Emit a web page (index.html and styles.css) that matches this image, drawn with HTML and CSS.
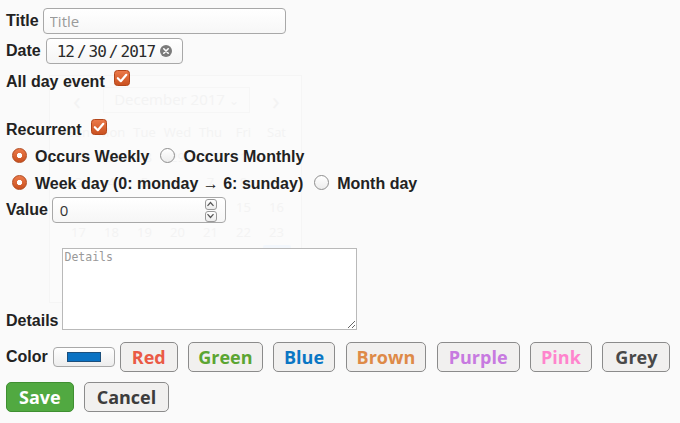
FILE: index.html
```html
<!DOCTYPE html>
<html lang="en">
<head>
<meta charset="utf-8">
<title>Event form</title>
<link rel="stylesheet" href="styles.css">
</head>
<body>
<form class="event-form">
  <div class="row r-title">
    <label class="lbl">Title</label>
    <input class="text-input title-input" type="text" placeholder="Title">
  </div>
  <div class="row r-date">
    <label class="lbl">Date</label>
    <div class="date-input">
      <span class="seg">12</span><span class="sep">/</span><span class="seg">30</span><span class="sep">/</span><span class="seg">2017</span>
      <svg class="clear" width="12" height="12" viewBox="0 0 12 12"><circle cx="6" cy="6" r="6" fill="#7b7b7b"/><path d="M3.8 3.8 L8.2 8.2 M8.2 3.8 L3.8 8.2" stroke="#fff" stroke-width="1.6" stroke-linecap="round"/></svg>
    </div>
  </div>
  <div class="row r-allday">
    <label class="lbl">All day event</label>
    <span class="checkbox cb-allday">
      <svg width="16" height="16" viewBox="0 0 16 16"><defs><linearGradient id="cbg" x1="0" y1="0" x2="0" y2="1"><stop offset="0" stop-color="#ec7a4a"/><stop offset="1" stop-color="#c9501f"/></linearGradient></defs><rect x="0.5" y="0.5" width="15" height="15" rx="3" fill="url(#cbg)" stroke="#b2461b"/><path d="M3.8 8.2 L6.8 11.2 L12.3 4.8" fill="none" stroke="#fff" stroke-width="2.2" stroke-linecap="round" stroke-linejoin="round"/></svg>
    </span>
  </div>
  <div class="row r-recurrent">
    <label class="lbl">Recurrent</label>
    <span class="checkbox cb-recurrent">
      <svg width="16" height="16" viewBox="0 0 16 16"><rect x="0.5" y="0.5" width="15" height="15" rx="3" fill="url(#cbg)" stroke="#b2461b"/><path d="M3.8 8.2 L6.8 11.2 L12.3 4.8" fill="none" stroke="#fff" stroke-width="2.2" stroke-linecap="round" stroke-linejoin="round"/></svg>
    </span>
  </div>
  <div class="row r-radio">
    <span class="radio checked"></span><span class="lbl">Occurs Weekly</span>
    <span class="radio"></span><span class="lbl">Occurs Monthly</span>
  </div>
  <div class="row r-radio r-radio2">
    <span class="radio checked"></span><span class="lbl">Week day (0: monday → 6: sunday)</span>
    <span class="radio"></span><span class="lbl">Month day</span>
  </div>
  <div class="row r-value">
    <label class="lbl">Value</label>
    <div class="num-input">
      <span class="num-val">0</span>
      <span class="spinner">
        <span class="spin"><svg width="9" height="6" viewBox="0 0 9 6"><path d="M1.5 4.8 L4.5 1.5 L7.5 4.8" fill="none" stroke="#555" stroke-width="1.2"/></svg></span>
        <span class="spin"><svg width="9" height="6" viewBox="0 0 9 6"><path d="M1.5 1.2 L4.5 4.5 L7.5 1.2" fill="none" stroke="#555" stroke-width="1.2"/></svg></span>
      </span>
    </div>
  </div>
  <div class="row r-details">
    <label class="lbl lbl-details">Details</label>
    <textarea class="details" placeholder="Details"></textarea>
  </div>
  <div class="row r-color">
    <label class="lbl">Color</label>
    <div class="color-input"><span class="swatch"></span></div>
    <button type="button" class="btn color-btn c-red">Red</button>
    <button type="button" class="btn color-btn c-green">Green</button>
    <button type="button" class="btn color-btn c-blue">Blue</button>
    <button type="button" class="btn color-btn c-brown">Brown</button>
    <button type="button" class="btn color-btn c-purple">Purple</button>
    <button type="button" class="btn color-btn c-pink">Pink</button>
    <button type="button" class="btn color-btn c-grey">Grey</button>
  </div>
  <div class="row r-actions">
    <button type="button" class="btn btn-save">Save</button>
    <button type="button" class="btn btn-cancel">Cancel</button>
  </div>
</form>

<div class="calendar">
  <div class="cal-head">
    <span class="cal-nav">‹</span>
    <span class="cal-month">December 2017 <span class="chev">⌄</span></span>
    <span class="cal-nav">›</span>
  </div>
  <div class="cal-grid">
    <span>Sun</span><span>Mon</span><span>Tue</span><span>Wed</span><span>Thu</span><span>Fri</span><span>Sat</span>
    <span>26</span><span>27</span><span>28</span><span>29</span><span>30</span><span>1</span><span>2</span>
    <span>3</span><span>4</span><span>5</span><span>6</span><span>7</span><span>8</span><span>9</span>
    <span>10</span><span>11</span><span>12</span><span>13</span><span>14</span><span>15</span><span>16</span>
    <span>17</span><span>18</span><span>19</span><span>20</span><span>21</span><span>22</span><span>23</span>
    <span>24</span><span>25</span><span>26</span><span>27</span><span>28</span><span>29</span><span class="sel">30</span>
    <span>31</span><span>1</span><span>2</span><span>3</span><span>4</span><span>5</span><span>6</span>
  </div>
</div>
</body>
</html>
```

FILE: styles.css
```css
html, body {
  margin: 0;
  background: #fafafa;
}
body {
  padding: 8px 6px 0;
  font: bold 16px "Liberation Sans", Arial, sans-serif;
  color: #222;
  position: relative;
  height: 423px;
  box-sizing: border-box;
  overflow: hidden;
}
.event-form {
  position: relative;
  z-index: 2;
}
.row {
  display: flex;
  align-items: center;
  column-gap: 4px;
}
.lbl {
  white-space: nowrap;
  line-height: 18px;
}
.r-title { height: 26px; }
.r-date { margin-top: 4px; height: 26px; }
.r-allday { margin-top: 8px; height: 20px; }
.r-recurrent { margin-top: 28px; height: 20px; }
.r-radio { margin-top: 7px; height: 20px; }
.r-value { margin-top: 3px; height: 26px; }
.r-details { margin-top: 25px; align-items: flex-end; }
.r-color { margin-top: 12px; height: 30px; }
.r-actions { margin-top: 10px; height: 30px; }

.text-input {
  box-sizing: border-box;
  height: 26px;
  border: 1px solid #a8a8a8;
  border-radius: 4px;
  background: linear-gradient(#ffffff, #f7f7f7);
  padding: 0 6px;
  font: 15px "Open Sans", sans-serif;
  color: #333;
  margin: 0;
  outline: none;
}
.text-input::placeholder { color: #9a9a9a; }
.title-input { width: 243px; }

.date-input {
  box-sizing: border-box;
  width: 137px;
  height: 26px;
  margin-left: 1px;
  padding-left: 10px;
  border: 1px solid #a8a8a8;
  border-radius: 4px;
  background: linear-gradient(#ffffff, #f5f5f5);
  display: flex;
  align-items: center;
  font: 16px "DejaVu Sans Mono", monospace;
  letter-spacing: -1px;
  color: #2a2a2a;
}
.sep { margin: 0 3px; }
.clear { margin-left: 5px; flex: none; }

.checkbox {
  width: 16px;
  height: 16px;
  margin-left: 5px;
  display: block;
}
.checkbox svg { display: block; }
.cb-allday { margin-bottom: 8px; }
.cb-recurrent { margin-bottom: 6px; }

.radio {
  box-sizing: border-box;
  width: 15px;
  height: 15px;
  border-radius: 50%;
  border: 1px solid #8e8e8e;
  background: linear-gradient(#ffffff, #ececec);
  margin: 0 4px 4px 6px;
  flex: none;
}
.radio.checked {
  border-color: #b04a1f;
  background: radial-gradient(circle, #ffffff 0 2.4px, transparent 2.9px), linear-gradient(#ec7a4a, #c9501f);
}
.r-radio .lbl + .radio { margin-left: 7px; }

.num-input {
  box-sizing: border-box;
  width: 174px;
  height: 26px;
  border: 1px solid #a8a8a8;
  border-radius: 4px;
  background: linear-gradient(#ffffff, #f6f6f6);
  display: flex;
  align-items: center;
  padding: 0 8px 0 7px;
  font: 15px "Open Sans", sans-serif;
  color: #333;
}
.num-val { flex: 1; }
.spinner {
  display: flex;
  flex-direction: column;
  gap: 1px;
}
.spin {
  box-sizing: border-box;
  width: 12px;
  height: 11px;
  border: 1px solid #9a9a9a;
  border-radius: 3px;
  background: linear-gradient(#ffffff, #ececec);
  display: flex;
  align-items: center;
  justify-content: center;
}
.spin svg { display: block; }

.details {
  box-sizing: border-box;
  width: 295px;
  height: 82px;
  margin: 0;
  border: 1px solid #b9b9b9;
  background: #fff;
  padding: 1px 1px;
  font: 11.5px/14px "DejaVu Sans Mono", monospace;
  color: #333;
  outline: none;
}
.details::placeholder { color: #999; }

.color-input {
  box-sizing: border-box;
  width: 62px;
  height: 20px;
  margin-left: 1px;
  border: 1px solid #a8a8a8;
  border-radius: 4px;
  background: linear-gradient(#ffffff, #ededed);
  display: flex;
  align-items: center;
  padding-left: 13px;
}
.swatch {
  width: 34px;
  height: 10px;
  box-sizing: border-box;
  background: #0a72c3;
  border: 1px solid #1c4f7c;
}

.btn {
  box-sizing: border-box;
  height: 30px;
  margin: 0;
  padding: 0 10px;
  border: 1px solid #8b8b8b;
  border-radius: 5px;
  background: #f1f0ef;
  font: bold 18px/28px "Open Sans", sans-serif;
  white-space: nowrap;
}
.color-btn { margin-left: 6.5px; }
.color-input + .color-btn { margin-left: 1px; }
.c-red { color: #ea5a45; padding: 0 11px; }
.c-green { color: #5ba532; padding: 0 9px; }
.c-blue { color: #0a76c4; }
.c-brown { color: #de8a48; }
.c-purple { color: #c77ae0; padding: 0 11px; }
.c-pink { color: #ff84cd; }
.c-grey { color: #494949; padding: 0 12px; }
.btn-save {
  background: #51a941;
  border-color: #3f8f31;
  color: #ffffff;
  padding: 0 12px;
}
.btn-cancel {
  margin-left: 6px;
  color: #3c3c3c;
  padding: 0 12px;
}

/* faded-out date picker popup */
.calendar {
  position: absolute;
  left: 49px;
  top: 75px;
  width: 253px;
  height: 228px;
  box-sizing: border-box;
  border: 1px solid #f5f5f5;
  background: #fbfbfb;
  z-index: 1;
  font: 14px "Open Sans", sans-serif;
  color: #f3f3f3;
  padding: 12px 10px 0 12px;
}
.cal-head {
  display: flex;
  align-items: center;
  justify-content: space-between;
  height: 24px;
  font-size: 15px;
}
.cal-nav { font-size: 26px; width: 30px; text-align: center; line-height: 24px; }
.cal-month {
  border: 1px solid #f6f6f6;
  padding: 0 10px;
  line-height: 22px;
}
.chev { font-size: 12px; }
.cal-grid {
  margin-top: 7px;
  display: grid;
  grid-template-columns: repeat(7, 33px);
  grid-auto-rows: 25px;
  align-items: center;
  justify-items: center;
  font-size: 13px;
}
.cal-grid .sel {
  background: #f3f7fc;
  color: #fbfcfe;
  width: 28px;
  height: 23px;
  line-height: 23px;
  text-align: center;
  border-radius: 2px;
}
```
